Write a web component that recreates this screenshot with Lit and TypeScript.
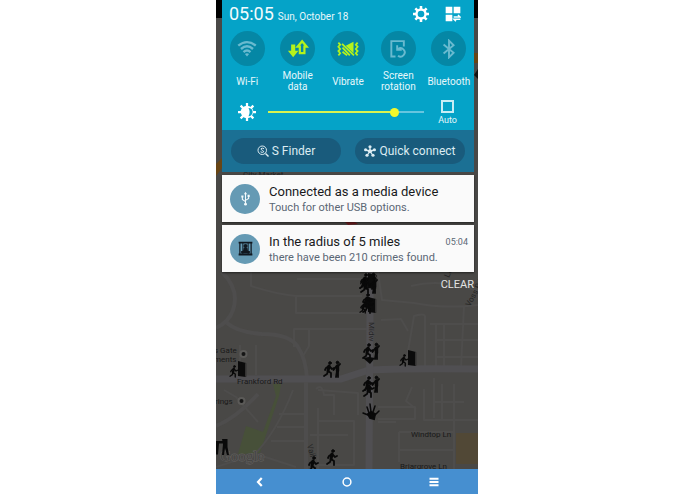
import { LitElement, html, svg, css } from "lit";
import { customElement, property, state } from "lit/decorators.js";
import { classMap } from "lit/directives/class-map.js";

const icons = {
  wifi: svg`<g fill="none" stroke="currentColor" stroke-width="2.900">
    <path d="M1.500 8Q12-.5 22.500 8"/><path d="M4.800 12Q12 5.500 19.200 12"/><path d="M7.800 15.700Q12 12 16.200 15.700"/></g>
    <path d="M9.500 18Q12 16 14.500 18L12 21Z" fill="currentColor"/>`,
  data: svg`<path d="M4.500 7h4.500v7h3.500l-5.800 7L1 14h3.500Z" fill="currentColor"/>
    <path d="M16.500 3.500l5 6h-2.500v7h-5v-7h-2.500Z" fill="none" stroke="currentColor" stroke-width="2.400"/>`,
  vibrate: svg`<g fill="none" stroke="currentColor" stroke-width="1.900">
    <path d="M1.500 5l2 2.300-2 2.300 2 2.400-2 2.300 2 2.300-2 2.400M22.500 5l-2 2.300 2 2.300-2 2.400 2 2.300-2 2.300 2 2.400"/>
    <path d="M5.500 6.500L18.500 19" /><path d="M6 10.500L14 19M6 15l5 4"/></g>
    <path d="M9.500 8.500L18 4v12.500Z" fill="currentColor"/>`,
  rotation: svg`<g fill="none" stroke="currentColor" stroke-width="2.300">
    <path d="M9 21H4V2.500h15V9"/><path d="M12 12a5 5 0 1 1 0 8"/><path d="M11 7.500v5.500h5.500"/></g>`,
  bluetooth: svg`<path d="M5.500 6.500l12 10-5.500 5.500v-20l5.500 5.500-12 10" fill="none" stroke="currentColor" stroke-width="2.300"/>`,
  gear: svg`<circle cx="12" cy="12" r="6.800" fill="none" stroke="currentColor" stroke-width="3.600"/>
    <path d="M12 0v5M12 19v5M0 12h5M19 12h5M3.500 3.500l3.500 3.500M17 17l3.500 3.500M20.500 3.500L17 7M7 17l-3.500 3.500" stroke="currentColor" stroke-width="3.800"/>`,
  grid: svg`<path d="M1 1h10v10H1ZM13 1h10v10H13ZM1 13h10v10H1Z" fill="currentColor"/>
    <path d="M13 16.500h9.500l-3-3M23 20h-9.500l3 3" fill="none" stroke="currentColor" stroke-width="2.200"/>`,
  bright: svg`<circle cx="12" cy="12" r="8.300" fill="currentColor"/>
    <path d="M12 0v24M0 12h24M3.500 3.500l17 17M20.500 3.500l-17 17" stroke="currentColor" stroke-width="3"/>
    <path d="M14 6.500a5.500 5.500 0 0 1 0 11q3-5.500 0-11Z" fill="#05a3c8"/>`,
  finder: svg`<circle cx="10.500" cy="10.500" r="8.500" fill="none" stroke="currentColor" stroke-width="2"/>
    <path d="M17 17l6 6" stroke="currentColor" stroke-width="2.800"/>
    <path d="M14 7.500q-3.500-2.500-6 0 0 2 2.500 3t3 3.200q-3 2.500-6.500-.2" fill="none" stroke="currentColor" stroke-width="2"/>`,
  connect: svg`<path d="M12 12.500V4M12 12.500L3 10M12 12.500l9-2.500M12 12.500L6 21M12 12.500l6 8.500" stroke="currentColor" stroke-width="2.600"/>
    <g fill="currentColor"><circle cx="12" cy="12.500" r="4"/><circle cx="12" cy="3.500" r="3.200"/><circle cx="3.200" cy="9.500" r="3.200"/><circle cx="20.800" cy="9.500" r="3.200"/><circle cx="6" cy="20.500" r="3.200"/><circle cx="18" cy="20.500" r="3.200"/></g>`,
  usb: svg`<path d="M12 3v18M12 17l-5-3.500V9M12 15l5-3V8" fill="none" stroke="currentColor" stroke-width="1.700"/>
    <path d="M9.500 5L12 1l2.500 4ZM5.300 7h3.400v3.400H5.300ZM15.300 6h3.400v3.400h-3.400Z" fill="currentColor"/><circle cx="12" cy="21" r="2.200" fill="currentColor"/>`,
  jail: svg`<path d="M1 1h22v3H1ZM1 20h22v3H1ZM2 3h2v18H2ZM7 3h1.500v18H7ZM15.500 3H17v18h-1.500ZM20 3h2v18h-2Z" fill="#101820"/>
    <circle cx="12" cy="8" r="3.400" fill="#101820"/><path d="M5 20v-4h3l1-5h6l1 5h3v4Z" fill="#101820"/>`,
  back: svg`<path d="M15.500 4L8 12l7.500 8" fill="none" stroke="currentColor" stroke-width="4.400"/>`,
  home: svg`<circle cx="12" cy="12" r="7.800" fill="none" stroke="currentColor" stroke-width="3"/>`,
  menu: svg`<path d="M3 5.500h18M3 12h18M3 18.500h18" stroke="currentColor" stroke-width="4"/>`,
};
type IconName = keyof typeof icons;

@customElement("ui-icon")
class UiIcon extends LitElement {
  @property() name: IconName = "wifi";
  static styles = css`
    :host { display: block; flex: none; }
    svg { display: block; width: 100%; height: 100%; }
  `;
  render() {
    return html`<svg viewBox="0 0 24 24" aria-hidden="true">${icons[this.name]}</svg>`;
  }
}

/* Street map drawn in screen units, dimmed behind the notification shade. */
@customElement("street-map")
class StreetMap extends LitElement {
  static styles = css`
    :host { display: block; }
    svg { display: block; width: 100%; height: 100%; }
    .road { fill: none; stroke: #4e4d4c; stroke-width: 2; stroke-linejoin: round; }
    .lane { fill: none; stroke: #4e4d4d; stroke-width: 4; }
    .main { fill: none; stroke: #504f52; stroke-width: 7; }
    .label { font: 8px Roboto, sans-serif; fill: #191919; }
    .street { fill: #242424; }
    .logo { font: 15px "Liberation Serif", serif; fill: #464544; stroke: #63615f; stroke-width: 1px; paint-order: stroke; }
  `;
  render() {
    return html`<svg viewBox="216 0 262 469" preserveAspectRatio="xMidYMin slice" role="img" aria-label="Map of crimes">
      <defs>
        <g id="run" fill="none" stroke="#090909" stroke-width="1.800" stroke-linecap="round" stroke-linejoin="round">
          <circle cx="6" cy="2" r="1.300" fill="#090909" stroke-width="1"/>
          <path d="M5 5L4 10" stroke-width="3"/><path d="M5 5l3 3 2-1M5 5L2 7 1 9M4 10l3 2v4M4 10l-1 3-3 2"/>
        </g>
        <g id="pair"><use href="#run"/>
          <g fill="none" stroke="#090909" stroke-width="1.800" stroke-linecap="round"><circle cx="13.500" cy="1.500" r="1.300" fill="#090909" stroke-width="1"/>
          <path d="M13.500 5v5" stroke-width="3.400"/><path d="M12.500 5l-3 4M14 5l2-2M13 10l-1 6M14 10v6"/></g>
        </g>
        <g id="door"><path d="M7 0l8 2v14l-8-1Z" fill="#0b0b0b"/><path d="M14 2l1.500 .3v13.500H14Z" fill="#343332"/><g transform="translate(-1 4) scale(.75)"><use href="#run"/></g></g>
        <g id="hand" fill="none" stroke="#090909" stroke-linecap="round"><path d="M5 11l3-2 4 2-1 5-4-1Z" fill="#090909" stroke-width="2"/><path d="M5 12L0 10M6 10L4 4M8 9L7 1M10 9l2-6M12 12l4-4" stroke-width="1.500"/></g>
      </defs>
      <path d="M216 0h262v469H216Z" fill="#494846"/>
      <path d="M216 0h262v18H216Z" fill="#000"/>
      <path d="M474 53h4v10h-4Z" fill="#684515"/>
      <path d="M216 164l6-6v10l-6 8Z" fill="#684515"/>
      <path d="M478 69l-4 6 4 4Z" fill="#111"/>
      <path d="M273 384h8l-2 12-19 57-22 1 8-28 17 6 13-36Z" fill="#475039"/>
      <path d="M456 433h22v31h-22Z" fill="#514836"/>
      <path class="lane" d="M222 272q18 18 11 38-4 12-17 18M227 323q10 9 35 11 28 0 36 13 8 12 9 32M216 426q20-8 42-32"/>
      <path class="road" d="M251 272v14q25 8 45 10h66M297 279h68M296 296v17h72M294 347v-18h76M309 329v17l-6 10M240 345v22M256 345v30M293 390q-16 42-40 66M279 414h27M277 427h29M271 441h35M318 390l40 3v22M334 415v-20h-10q-2-12-8-6M318 408v61M318 421h36v44h-36M310 435h38M216 467l40-13 40 13M224 390l12 7 22 25"/>
      <path class="road" d="M378 272l4 28 32 3q30 6 64 2M381 320l20-1 7 12M406 363l8-47q10-3 11 0v52M430 324h48M436 340h42M436 357h42M436 324v44M444 324v44M464 306l-3 62M411 286q30-8 67 5M412 387l-6 14 10 8M424 389v31h54M434 402h30M454 384v85M378 407h37v12h-37M399 432h55M399 432v30M400 450h55M434 378v40M442 384v35M378 422h18"/>
      <path class="main" d="M216 379h125l28-9q40-2 109-1"/>
      <path class="main" d="M370 272v42l-1 155"/>
      <path class="lane" d="M306 382v87"/>
      <path d="M345 222h10l3 2-10 1Z" fill="#6c1e20"/>
      <g class="label">
        <text x="214" y="353">s Gate</text><text x="214" y="362">ments</text>
        <text x="237" y="384">Frankford Rd</text><text x="215" y="404">rings</text>
        <text x="411" y="437">Windtop Ln</text><text x="400" y="469">Briargrove Ln</text>
        <text class="street" transform="translate(470 307) rotate(-62)">Voss Rd</text>
        <text class="street" transform="translate(449 278) rotate(-68)">La</text>
        <text class="street" transform="translate(369 322) rotate(90)">Midw</text>
        <text class="street" transform="translate(307 445) rotate(75)">Vail</text>
        <text class="street" x="243" y="177">City Market</text>
      </g>
      <text class="logo" x="220" y="461">Google</text>
      <g fill="#151515" stroke="#5b5a58" stroke-width="2"><circle cx="243.500" cy="354" r="3"/><circle cx="241.500" cy="401" r="3"/></g>
      <use href="#pair" x="360" y="273"/><use href="#door" x="361" y="273"/><use href="#pair" x="361" y="277"/>
      <use href="#door" x="361" y="297"/><use href="#run" x="362" y="293"/><use href="#run" x="363" y="297"/>
      <use href="#pair" x="363" y="343"/><path d="M363 358l6-1 6 1-5 6Z" fill="#090909"/>
      <use href="#door" x="401" y="350"/><use href="#door" x="231" y="361"/>
      <use href="#pair" x="324" y="361"/><use href="#pair" x="363" y="376"/><use href="#run" x="364" y="381"/>
      <use href="#hand" x="363" y="403"/>
      <use href="#run" x="327" y="449"/><use href="#run" x="308" y="456"/>
      <path d="M216 441h9v2.500h-6l-1 11h-2ZM222 439h5.500v8l1.500 8h-2l-2-7-1 7h-2l1-11Z" fill="#090909"/>
    </svg>`;
  }
}

@customElement("app-root")
class AppRoot extends LitElement {
  @state() level = 83;
  static styles = css`
    :host { display: block; background: #fff; font-family: Roboto, sans-serif; color: #e6f7fb; }
    * { box-sizing: border-box; }
    button { font: inherit; color: inherit; border: 0; padding: 0; background: none; }
    .phone { position: relative; display: flex; flex-direction: column; max-width: 263px; min-height: 100vh; margin: 0 auto; border-right: 1px solid #fff; overflow: hidden; }
    .map { position: absolute; inset: 0 0 25px; }
    .shade { position: relative; flex: 1; padding: 0 4px 0 6px; }
    .quick { background: #05a3c8; height: 130px; }
    header { display: flex; align-items: center; height: 28px; padding: 0 13px 0 7px; }
    .clock { font-size: 18px; line-height: 26px; color: #f2fbfd; }
    .date { font-size: 10px; line-height: 14px; margin: 5px auto 0 4px; }
    .tool ui-icon { width: 16px; height: 16px; color: #fff; }
    .tool + .tool { margin-left: 16px; }
    .tiles { display: grid; grid-template-columns: repeat(5, 1fr); padding-top: 3px; }
    .tile { display: flex; flex-direction: column; align-items: center; gap: 4px; font-size: 10px; line-height: 11px; }
    .disc { display: grid; place-items: center; width: 35px; height: 35px; border-radius: 50%; background: #0587a5; color: #69bacf; }
    .disc ui-icon { width: 20px; height: 20px; }
    .on .disc { color: #b5f31b; }
    .on .disc ui-icon { width: 22px; height: 22px; }
    .name { display: grid; place-items: center; height: 22px; }
    .light { display: flex; align-items: center; height: 36px; padding: 0 17px 0 16px; margin-top: 2px; }
    .light ui-icon { width: 18px; height: 18px; color: #fff; }
    .range { appearance: none; flex: 1; min-width: 0; height: 10px; margin: 0 14px 0 12px; background: linear-gradient(#d8f34f, #d8f34f) left center / var(--level) 2px no-repeat, linear-gradient(#66c5df, #66c5df) center / 100% 2px no-repeat; }
    .range::-webkit-slider-thumb { appearance: none; width: 9px; height: 9px; border-radius: 50%; background: #f2f82c; }
    .auto { display: flex; flex-direction: column; align-items: center; font-size: 9px; line-height: 12px; padding-top: 2px; }
    .auto input { appearance: none; width: 13px; height: 13px; margin: 0 0 1px; border: 2px solid #c9edf5; }
    .apps { display: flex; gap: 14px; height: 42px; padding: 8px 9px; background: #1b7094; }
    .pill { flex: 1; display: flex; align-items: center; justify-content: center; gap: 3px; height: 26px; border-radius: 13px; background: #195b7c; font-size: 12px; line-height: 16px; color: #dcecf2; white-space: nowrap; }
    .pill ui-icon { width: 12px; height: 12px; }
    .card { display: flex; align-items: center; gap: 9px; height: 47px; margin-top: 3px; padding: 0 6px 0 8px; background: #fafafa; box-shadow: 0 1px 2px #0008; }
    .badge { display: grid; place-items: center; flex: none; width: 30px; height: 30px; border-radius: 50%; background: #659ab4; color: #f4fafc; }
    .badge ui-icon { width: 15px; height: 15px; }
    .text { flex: 1; white-space: nowrap; min-width: 0; padding-top: 2px; }
    .title { display: flex; align-items: center; justify-content: space-between; margin: 0; font-size: 13px; line-height: 16px; font-weight: 400; color: #18191b; }
    .time { font-size: 9px; color: #5a6775; }
    .body { margin: 0; font-size: 11px; line-height: 16px; color: #5a6775; }
    .clear { display: block; margin: 5px 0 0 auto; font-size: 11px; line-height: 16px; color: #e3e3e3; }
    nav { position: relative; display: grid; grid-template-columns: repeat(3, 1fr); height: 25px; background: #468fd0; color: #fff; }
    nav button { display: grid; place-items: center; }
    nav ui-icon { width: 12px; height: 12px; }
  `;

  tile(icon: IconName, name: unknown, on = false) {
    return html`<button class=${classMap({ tile: true, on })} aria-pressed=${on ? "true" : "false"}>
      <span class="disc"><ui-icon name=${icon}></ui-icon></span><span class="name"><span>${name}</span></span>
    </button>`;
  }

  card(icon: IconName, title: string, body: string, time = "") {
    return html`<article class="card">
      <span class="badge"><ui-icon name=${icon}></ui-icon></span>
      <div class="text">
        <h2 class="title">${title}${time ? html`<time class="time">${time}</time>` : ""}</h2>
        <p class="body">${body}</p>
      </div>
    </article>`;
  }

  render() {
    return html`<main class="phone">
      <street-map class="map"></street-map>
      <div class="shade">
        <section class="quick">
          <header>
            <time class="clock">05:05</time><span class="date">Sun, October 18</span>
            <button class="tool" aria-label="Settings"><ui-icon name="gear"></ui-icon></button>
            <button class="tool" aria-label="Edit quick settings"><ui-icon name="grid"></ui-icon></button>
          </header>
          <div class="tiles">
            ${this.tile("wifi", "Wi-Fi")}
            ${this.tile("data", html`Mobile<br>data`, true)}
            ${this.tile("vibrate", "Vibrate", true)}
            ${this.tile("rotation", html`Screen<br>rotation`)}
            ${this.tile("bluetooth", "Bluetooth")}
          </div>
          <div class="light">
            <ui-icon name="bright"></ui-icon>
            <input class="range" type="range" aria-label="Brightness" .value=${String(this.level)}
              style="--level: ${this.level}%"
              @input=${(e: Event) => (this.level = Number((e.target as HTMLInputElement).value))}>
            <label class="auto"><input type="checkbox">Auto</label>
          </div>
        </section>
        <section class="apps">
          <button class="pill"><ui-icon name="finder"></ui-icon>S Finder</button>
          <button class="pill"><ui-icon name="connect"></ui-icon>Quick connect</button>
        </section>
        ${this.card("usb", "Connected as a media device", "Touch for other USB options.")}
        ${this.card("jail", "In the radius of 5 miles", "there have been 210 crimes found.", "05:04")}
        <button class="clear">CLEAR</button>
      </div>
      <nav>
        <button aria-label="Back"><ui-icon name="back"></ui-icon></button>
        <button aria-label="Home"><ui-icon name="home"></ui-icon></button>
        <button aria-label="Menu"><ui-icon name="menu"></ui-icon></button>
      </nav>
    </main>`;
  }
}
